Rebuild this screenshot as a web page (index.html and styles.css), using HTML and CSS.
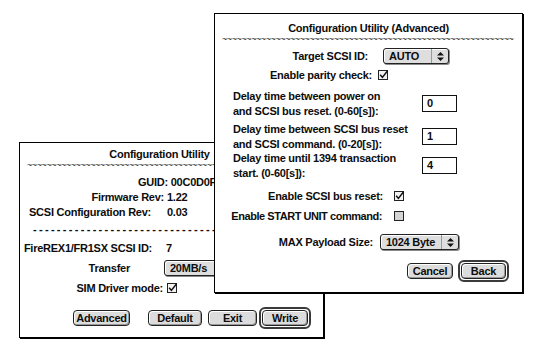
FILE: index.html
```html
<!DOCTYPE html>
<html>
<head>
<meta charset="utf-8">
<link rel="stylesheet" href="styles.css">
</head>
<body>
<div class="desktop">

  <div class="win win-back">
    <div class="title title-back">Configuration Utility</div>
    <div class="tildes tildes-back">~~~~~~~~~~~~~~~~~~~~~~~~~~~~~~~~~~~~~~~~~~~~~~~~~~~~~~~~~~~</div>
    <div class="row r15 guid">GUID: 00C0D0FFFE</div>
    <div class="row r15"><span class="lbl w-firm">Firmware Rev:</span><span class="val ml-firm">1.22</span></div>
    <div class="row r15"><span class="lbl w-scsi">SCSI Configuration Rev:</span><span class="val ml-scsi">0.03</span></div>
    <div class="dashes">----------------------------------------</div>
    <div class="row r20 fire-row"><span class="lbl w-fire">FireREX1/FR1SX SCSI ID:</span><span class="val ml-fire">7</span></div>
    <div class="row r20"><span class="lbl w-transfer">Transfer</span>
      <div class="popup popup-transfer ml-transfer"><span class="popup-text">20MB/s</span><span class="popup-arrows"><svg width="7" height="9" viewBox="0 0 7 9"><path d="M3.5 0 L7 3.5 L0 3.5 Z M0 5.5 L7 5.5 L3.5 9 Z" fill="#111"/></svg></span></div>
    </div>
    <div class="row r20"><span class="lbl w-sim">SIM Driver mode:</span>
      <span class="check ml-sim"><svg width="12" height="12" viewBox="0 0 12 12"><rect x="0.5" y="1.5" width="9" height="9" fill="#f2f2f2" stroke="#222"/><path d="M2.2 5.8 L4.4 8.4 L9.6 1.8" fill="none" stroke="#111" stroke-width="1.5"/></svg></span>
    </div>
    <div class="btn-row btn-row-back">
      <span class="btn w-adv">Advanced</span>
      <span class="btn w-def">Default</span>
      <span class="btn w-exit">Exit</span>
      <span class="ring"><span class="btn w-write">Write</span></span>
    </div>
  </div>

  <div class="win win-front">
    <div class="title">Configuration Utility (Advanced)</div>
    <div class="tildes tildes-front">~~~~~~~~~~~~~~~~~~~~~~~~~~~~~~~~~~~~~~~~~~~~~~~~~~~~~~~~~~~~</div>
    <div class="row r20 target-row"><span class="lbl w-target">Target SCSI ID:</span>
      <div class="popup popup-auto ml-target"><span class="popup-text">AUTO</span><span class="popup-arrows"><svg width="7" height="9" viewBox="0 0 7 9"><path d="M3.5 0 L7 3.5 L0 3.5 Z M0 5.5 L7 5.5 L3.5 9 Z" fill="#111"/></svg></span></div>
    </div>
    <div class="row r18"><span class="lbl w-parity">Enable parity check:</span>
      <span class="check ml-parity"><svg width="12" height="12" viewBox="0 0 12 12"><rect x="0.5" y="1.5" width="9" height="9" fill="#f2f2f2" stroke="#222"/><path d="M2.2 5.8 L4.4 8.4 L9.6 1.8" fill="none" stroke="#111" stroke-width="1.5"/></svg></span>
    </div>
    <div class="delay delay1">
      <div class="delay-text">Delay time between power on<br>and SCSI bus reset. (0-60[s]):</div>
      <div class="field">0</div>
    </div>
    <div class="delay delay2">
      <div class="delay-text">Delay time between SCSI bus reset<br>and SCSI command. (0-20[s]):</div>
      <div class="field">1</div>
    </div>
    <div class="delay delay3">
      <div class="delay-text">Delay time until 1394 transaction<br>start. (0-60[s]):</div>
      <div class="field">4</div>
    </div>
    <div class="row r20 reset-row"><span class="lbl w-reset">Enable SCSI bus reset:</span>
      <span class="check ml-reset"><svg width="12" height="12" viewBox="0 0 12 12"><rect x="0.5" y="1.5" width="9" height="9" fill="#f2f2f2" stroke="#222"/><path d="M2.2 5.8 L4.4 8.4 L9.6 1.8" fill="none" stroke="#111" stroke-width="1.5"/></svg></span>
    </div>
    <div class="row r20"><span class="lbl w-start">Enable START UNIT command:</span>
      <span class="check ml-start"><svg width="12" height="12" viewBox="0 0 12 12"><rect x="0.5" y="1.5" width="9" height="9" fill="#d4d4d4" stroke="#222"/></svg></span>
    </div>
    <div class="row r20 max-row"><span class="lbl w-max">MAX Payload Size:</span>
      <div class="popup popup-max ml-max"><span class="popup-text">1024 Byte</span><span class="popup-arrows"><svg width="7" height="9" viewBox="0 0 7 9"><path d="M3.5 0 L7 3.5 L0 3.5 Z M0 5.5 L7 5.5 L3.5 9 Z" fill="#111"/></svg></span></div>
    </div>
    <div class="btn-row btn-row-front">
      <span class="btn w-cancel">Cancel</span>
      <span class="ring"><span class="btn w-backbtn">Back</span></span>
    </div>
  </div>

</div>
</body>
</html>
```

FILE: styles.css
```css
html, body {
  margin: 0;
  padding: 0;
  background: #fff;
}
body {
  font-family: "Liberation Sans", Arial, sans-serif;
  font-weight: bold;
  font-size: 11px;
  letter-spacing: -0.25px;
  color: #0d0d0d;
}
.desktop {
  position: relative;
  width: 550px;
  height: 348px;
  overflow: hidden;
}
.win {
  position: absolute;
  box-sizing: border-box;
  background: #fff;
  border: 1px solid #000;
  box-shadow: 1px 1px 0 #000;
  overflow: hidden;
}
.win-back {
  left: 19px;
  top: 142px;
  width: 305px;
  height: 196px;
}
.win-front {
  left: 214px;
  top: 13px;
  width: 309px;
  height: 280px;
}

/* titles and separators */
.title {
  height: 14px;
  line-height: 14px;
  margin-top: 7px;
  text-align: center;
  white-space: nowrap;
}
.title-back {
  margin-top: 4px;
  width: 279px;
}
.tildes {
  height: 8px;
  line-height: 8px;
  font-size: 9px;
  font-weight: normal;
  color: #222;
  white-space: nowrap;
  overflow: hidden;
  letter-spacing: -0.4px;
}
.tildes-back { margin: 0 7px; }
.tildes-front { margin: 0 7px; }
.dashes {
  margin: 6px 13px 0 13px;
  height: 8px;
  line-height: 8px;
  white-space: nowrap;
  overflow: hidden;
  letter-spacing: 2.3px;
}

/* rows */
.row {
  display: flex;
  align-items: center;
  white-space: nowrap;
}
.r15 { height: 15px; }
.r18 { height: 18px; }
.r20 { height: 20px; }
.lbl {
  flex: none;
  text-align: right;
}
.val { flex: none; }

.guid { margin-top: 5px; padding-left: 118px; }
.w-firm { width: 144px; }
.ml-firm { margin-left: 3px; }
.w-scsi { width: 131px; }
.ml-scsi { margin-left: 16px; }
.fire-row { margin-top: 5px; }
.w-fire { width: 132px; }
.ml-fire { margin-left: 14px; }
.w-transfer { width: 110px; }
.ml-transfer { margin-left: 34px; }
.w-sim { width: 143px; }
.ml-sim { margin-left: 4px; }

.target-row { margin-top: 3px; }
.w-target { width: 153px; }
.ml-target { margin-left: 15px; }
.w-parity { width: 157px; }
.ml-parity { margin-left: 6px; }
.reset-row { margin-top: 6px; }
.w-reset { width: 168px; }
.ml-reset { margin-left: 11px; }
.w-start { width: 167px; letter-spacing: -0.45px; }
.ml-start { margin-left: 12px; }
.max-row { margin-top: 6px; }
.w-max { width: 158px; }
.ml-max { margin-left: 7px; }

/* delay rows */
.delay {
  display: flex;
  align-items: center;
  height: 29px;
  padding-left: 18px;
}
.delay1 { margin-top: 5px; }
.delay2 { margin-top: 4px; }
.delay3 { margin-top: 0; }
.delay-text {
  width: 189px;
  line-height: 14.5px;
  white-space: nowrap;
}
.field {
  box-sizing: border-box;
  width: 35px;
  height: 17px;
  border: 1px solid #111;
  line-height: 15px;
  padding-left: 4px;
  background: #fff;
}

/* checkbox */
.check {
  display: flex;
  width: 12px;
  height: 12px;
}

/* popup menus */
.popup {
  box-sizing: border-box;
  display: flex;
  height: 16px;
  border: 1px solid #222;
  border-radius: 3px;
  background: #dedede;
  box-shadow: inset 1px 1px 0 #fff, 1px 1px 0 #8a8a8a;
}
.popup-text {
  flex: 1;
  line-height: 14px;
  padding-left: 5px;
}
.popup-arrows {
  width: 16px;
  display: flex;
  align-items: center;
  justify-content: center;
  border-left: 1px solid #9a9a9a;
}
.popup-auto { width: 66px; }
.popup-max { width: 79px; }
.popup-transfer { width: 90px; }

/* buttons */
.btn-row {
  display: flex;
  align-items: center;
  height: 21px;
}
.btn-row-back {
  margin-top: 9px;
  padding-left: 53px;
}
.btn-row-front {
  margin-top: 8px;
  padding-left: 192px;
}
.btn {
  box-sizing: border-box;
  display: flex;
  align-items: center;
  justify-content: center;
  height: 16px;
  border: 1px solid #222;
  border-radius: 4px;
  background: #dcdcdc;
  box-shadow: inset 1px 1px 0 #fff, inset -1px -1px 0 #999;
}
.ring {
  display: flex;
  padding: 1px;
  border: 2px solid #3a3a3a;
  border-radius: 6px;
}
.w-adv { width: 57px; }
.w-def { width: 54px; margin-left: 18px; }
.w-exit { width: 49px; margin-left: 6px; }
.btn-row-back .ring { margin-left: 2px; }
.w-write { width: 46px; }
.w-cancel { width: 46px; }
.btn-row-front .ring { margin-left: 5px; }
.w-backbtn { width: 45px; }
```
